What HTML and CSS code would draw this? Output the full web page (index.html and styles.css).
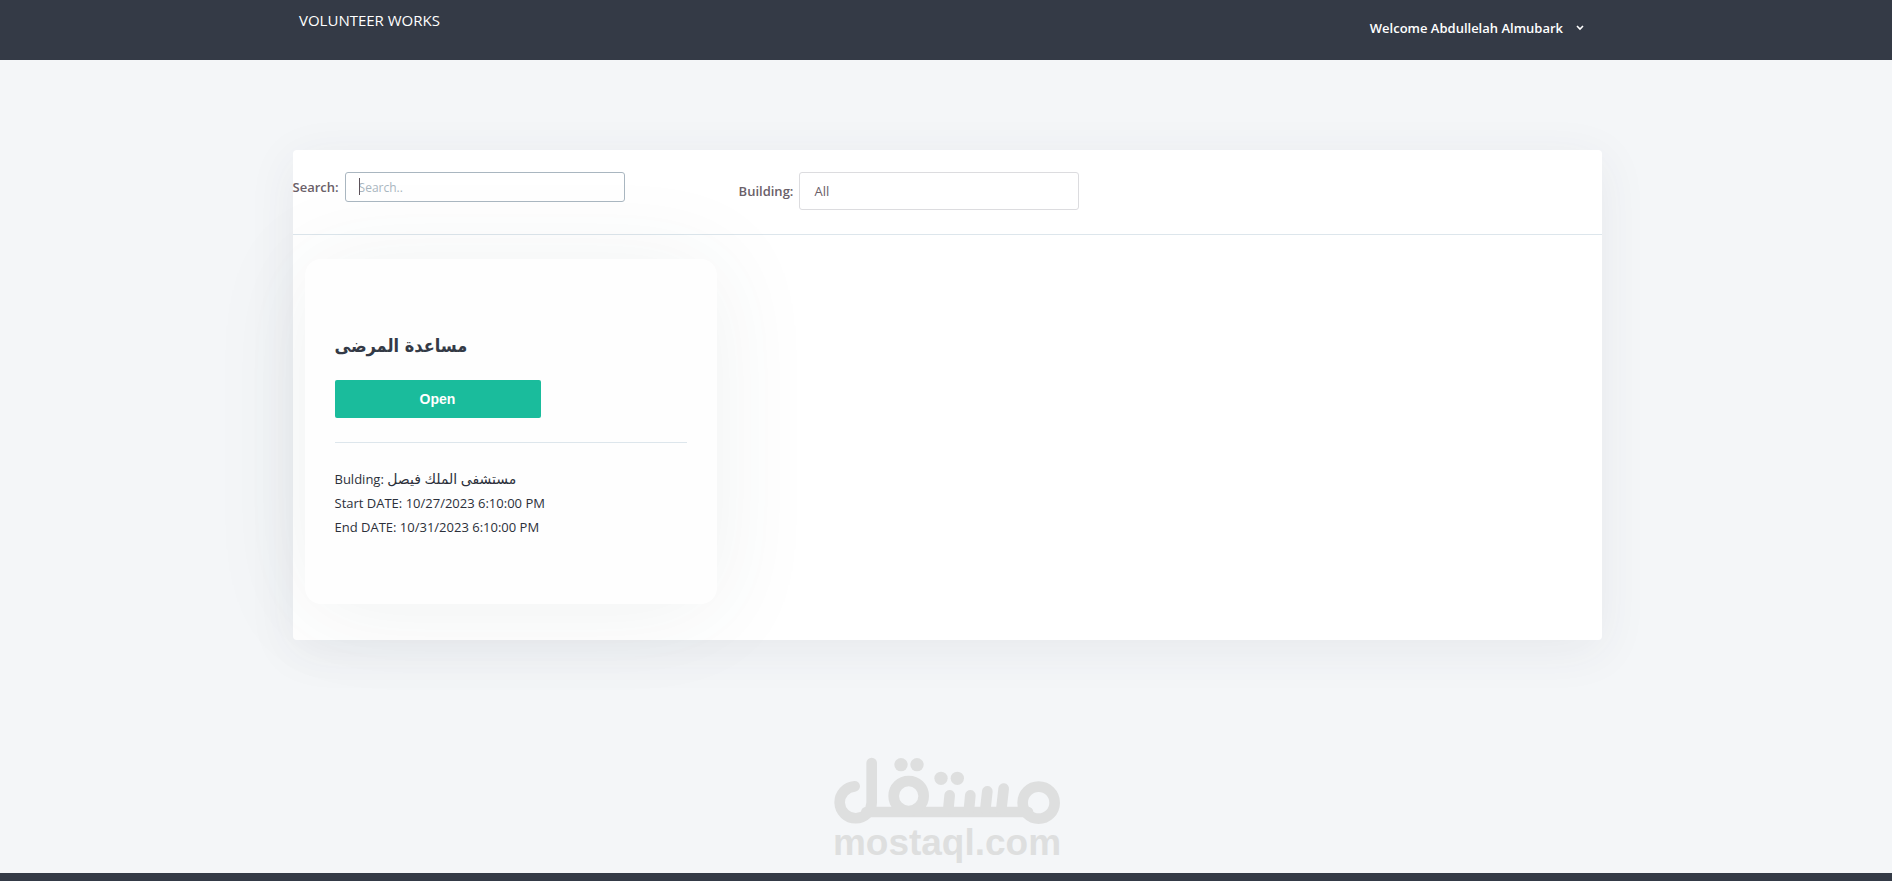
FILE: index.html
```html
<!DOCTYPE html>
<html lang="en">
<head>
<meta charset="utf-8">
<title>Volunteer Works</title>
<link rel="stylesheet" href="styles.css">
</head>
<body>
<header class="topbar">
  <div class="topbar-inner">
    <a class="brand" href="#">VOLUNTEER WORKS</a>
    <button class="account" type="button">Welcome Abdullelah Almubark
      <svg class="chevron" viewBox="0 0 8 6" aria-hidden="true"><path d="M1 1l3 3 3-3" fill="none" stroke="currentColor" stroke-width="1.6"/></svg>
    </button>
  </div>
</header>
<main class="page">
  <section class="panel">
    <form class="filters">
      <div class="field">
        <label for="search">Search:</label>
        <span class="search-wrap"><input class="control control-search" id="search" type="text" placeholder="Search.."></span>
      </div>
      <div class="field">
        <label for="building">Building:</label>
        <select class="control control-select" id="building"><option>All</option></select>
      </div>
    </form>
    <div class="cards">
      <article class="card">
        <h2 class="card-title"><bdi lang="ar">مساعدة المرضى</bdi></h2>
        <button class="open" type="button">Open</button>
        <hr class="rule">
        <p class="line">Bulding: <bdi class="place" lang="ar">مستشفى الملك فيصل</bdi></p>
        <p class="line">Start DATE: 10/27/2023 6:10:00 PM</p>
        <p class="line">End DATE: 10/31/2023 6:10:00 PM</p>
      </article>
    </div>
  </section>
  <div class="mark">
    <svg class="mark-logo" viewBox="62 50 690 206" aria-hidden="true">
      <g fill="none" stroke="currentColor" stroke-width="32" stroke-linecap="round">
        <path d="M130 141A48 48 0 1 0 181 190V71"/>
        <path d="M165 218H650"/>
        <circle cx="292" cy="170" r="45"/>
        <circle cx="682" cy="190" r="48"/>
        <path d="M415 168L411 210M477 168L473 210M528 156L522 210M577 148L570 210"/>
      </g>
      <g fill="currentColor"><circle cx="269" cy="76" r="20"/><circle cx="317" cy="76" r="20"/><circle cx="389" cy="117" r="20"/><circle cx="438" cy="117" r="20"/></g>
    </svg>
    <span class="mark-name">mostaql.com</span>
  </div>
</main>
<footer class="footer"></footer>
</body>
</html>
```
FILE: styles.css
```css
* { box-sizing: border-box; }
body {
  margin: 0;
  min-height: 100vh;
  display: flex;
  flex-direction: column;
  background: #f4f6f8;
  color: #343a46;
  font-family: "Open Sans", "Noto Sans", "DejaVu Sans", sans-serif;
  font-size: 13px;
}
.topbar { background: #343a46; height: 60px; }
.topbar-inner {
  max-width: 1310px;
  margin: 0 auto;
  padding: 0 17px 0 8px;
  display: flex;
  justify-content: space-between;
  align-items: flex-start;
}
.brand { color: #fff; text-decoration: none; line-height: 20px; padding-top: 10px; font-size: 15px; }
.account {
  display: flex;
  align-items: center;
  gap: 13px;
  padding: 18px 0 0;
  border: 0;
  background: none;
  color: #fff;
  font: 600 13px/20px "Open Sans", sans-serif;
}
.chevron { width: 8px; height: 6px; }
.page { flex: 1; padding: 90px 24px 0 26px; }
.panel {
  max-width: 1309px;
  margin: 0 auto;
  background: #fff;
  border-radius: 4px;
  box-shadow: 0 10px 50px rgba(52, 58, 90, 0.07);
}
.filters {
  display: flex;
  align-items: flex-start;
  gap: 114px;
  padding: 22px 0 24px;
  border-bottom: 1px solid #dde6ec;
}
.field { display: flex; align-items: center; gap: 6px; color: #6a6068; font-weight: 600; }
.search-wrap { position: relative; display: flex; }
.search-wrap::before {
  content: "";
  position: absolute;
  left: 14px;
  top: 6px;
  width: 1px;
  height: 17px;
  background: #5c525a;
}
.control {
  width: 280px;
  height: 30px;
  padding: 0 14px;
  border: 1px solid #a9b6c0;
  border-radius: 3px;
  background: transparent;
  color: #6a6068;
  font: 13px "Open Sans", sans-serif;
}
.control-search { padding: 0 13px; }
.control::placeholder { color: #a9b6c0; font-size: 12px; }
.control-select { height: 38px; appearance: none; border-color: #dcdcdf; }
.cards { padding: 24px 12px 36px; }
.card {
  max-width: 412px;
  padding: 71px 30px 65px;
  border-radius: 16px;
  background: #fefefe;
  box-shadow: 0 6px 100px rgba(52, 80, 80, 0.08);
}
.card-title { margin: 0 0 18px; font: bold 18px/32px "DejaVu Sans Condensed", "DejaVu Sans", sans-serif; }
.open {
  display: block;
  width: 206px;
  height: 38px;
  border: 0;
  border-radius: 2px;
  background: #1abc9c;
  color: #fff;
  font: bold 14px "Liberation Sans", sans-serif;
}
.rule { margin: 24px 0; border: 0; border-top: 1px solid #dde6ec; }
.line { margin: 0; line-height: 24px; color: #2c303a; }
.place { font-size: 14px; line-height: 20px; }
.mark { width: 230px; margin: 116px auto 0; color: #dedfdf; }
.page .mark { translate: none; }
.mark-logo { display: block; width: 230px; }
.mark-name { display: block; text-align: center; font: bold 37px/36px "Liberation Sans", sans-serif; }
.footer { height: 8px; background: #343a46; }
```
